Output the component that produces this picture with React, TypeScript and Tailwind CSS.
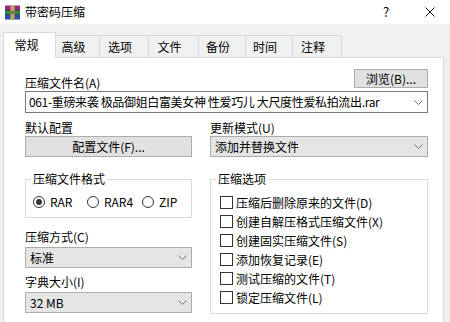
import React from "react";

const Chevron = () => (
  <svg width="9" height="5" viewBox="0 0 9 5" className="shrink-0">
    <polyline points="0.5,0.5 4.5,4.5 8.5,0.5" fill="none" stroke="#707070" strokeWidth="1" />
  </svg>
);

const RarIcon = () => (
  <svg width="15" height="15" viewBox="0 0 15 15" className="shrink-0">
    <rect x="0" y="0.5" width="15" height="4.5" fill="#9a2a7a" />
    <rect x="0" y="5" width="15" height="4.5" fill="#2f8a48" />
    <rect x="0" y="9.5" width="15" height="5" fill="#2c4fa8" />
    <rect x="0" y="4.6" width="15" height="0.8" fill="#5a1a4a" />
    <rect x="0" y="9.1" width="15" height="0.8" fill="#1a4a28" />
    <rect x="5.5" y="0" width="4" height="15" fill="#c8a36a" />
    <rect x="6" y="6" width="3" height="3" fill="#8a6a3a" />
  </svg>
);

const Radio = ({ checked, label }: { checked?: boolean; label: string }) => (
  <div className="flex items-center h-[16px]">
    <div className="w-[12px] h-[12px] rounded-full border border-[#333] bg-white flex items-center justify-center shrink-0">
      {checked && <div className="w-[6px] h-[6px] rounded-full bg-[#333]" />}
    </div>
    <span className="ml-[5px]">{label}</span>
  </div>
);

const Check = ({ label }: { label: string }) => (
  <div className="flex items-center h-[19px]">
    <div className="w-[13px] h-[13px] border border-[#333] bg-white shrink-0" />
    <span className="ml-[3px] whitespace-nowrap">{label}</span>
  </div>
);

const GraySelect = ({ value, w }: { value: string; w: string }) => (
  <div className={`${w} h-[21px] bg-[#e5e5e5] border border-[#acacac] flex items-center justify-between pl-[4px] pr-[4px]`}>
    <span className="whitespace-nowrap">{value}</span>
    <Chevron />
  </div>
);

export default function App() {
  const tabs = [
    { t: "高级", w: "w-[44px]" },
    { t: "选项", w: "w-[49px]" },
    { t: "文件", w: "w-[50px]" },
    { t: "备份", w: "w-[47px]" },
    { t: "时间", w: "w-[47px]" },
    { t: "注释", w: "w-[49px]" },
  ];
  return (
    <div className="w-[450px] h-[322px] overflow-hidden bg-[#f0f0f0] text-[12px] leading-[16px] text-[#000] font-['Noto_Sans_CJK_SC','Noto_Sans',sans-serif]">
      {/* title bar */}
      <div className="h-[24px] bg-white flex items-center">
        <div className="ml-[5px]">
          <RarIcon />
        </div>
        <span className="ml-[5px] text-[12px]">带密码压缩</span>
        <div className="flex-1" />
        <div className="w-[40px] flex justify-center text-[13px]">?</div>
        <div className="w-[40px] ml-[4px] flex justify-center">
          <svg width="10" height="10" viewBox="0 0 10 10">
            <line x1="0.5" y1="0.5" x2="9.5" y2="9.5" stroke="#111" strokeWidth="1" />
            <line x1="9.5" y1="0.5" x2="0.5" y2="9.5" stroke="#111" strokeWidth="1" />
          </svg>
        </div>
      </div>

      {/* tabs */}
      <div className="relative z-10 h-[34px] -mb-px flex items-end pl-[3px]">
        <div className="w-[53px] h-[26px] bg-white border border-b-0 border-[#d9d9d9] flex items-center justify-center pr-[6px] pb-[2px]">
          常规
        </div>
        {tabs.map((t) => (
          <div
            key={t.t}
            className={`${t.w} h-[23px] bg-[#f0f0f0] border border-l-0 border-[#d9d9d9] flex items-center justify-center pr-[8px]`}
          >
            {t.t}
          </div>
        ))}
      </div>

      {/* panel */}
      <div className="ml-[3px] w-[441px] h-[280px] bg-white border border-[#d9d9d9] pl-[21px] pt-[11px]">
        <div className="w-[403px] flex items-end justify-between h-[19px]">
          <span className="translate-y-[3px] whitespace-nowrap">压缩文件名(A)</span>
          <div className="w-[74px] h-[19px] bg-[#e1e1e1] border border-[#adadad] flex items-center justify-center">
            浏览(B)...
          </div>
        </div>
        <div className="mt-[3px] w-[403px] h-[22px] bg-white border border-[#7a7a7a] flex items-center justify-between pl-[3px] pr-[4px]">
          <span className="whitespace-nowrap tracking-[-0.35px]">061-重磅来袭 极品御姐白富美女神 性爱巧儿 大尺度性爱私拍流出.rar</span>
          <Chevron />
        </div>

        <div className="flex mt-[7px]">
          {/* left column */}
          <div className="w-[167px] flex flex-col">
            <span>默认配置</span>
            <div className="h-[21px] bg-[#e1e1e1] border border-[#adadad] flex items-center justify-center">
              配置文件(F)...
            </div>
            <fieldset className="mt-[14px] border border-[#dcdcdc] pl-[7px] pb-[7px]">
              <legend className="-ml-[2px] px-[2px]">压缩文件格式</legend>
              <div className="flex mt-[7px]">
                <div className="w-[54px]">
                  <Radio checked label="RAR" />
                </div>
                <div className="w-[55px]">
                  <Radio label="RAR4" />
                </div>
                <Radio label="ZIP" />
              </div>
            </fieldset>
            <span className="mt-[11px]">压缩方式(C)</span>
            <div className="mt-[2px]">
              <GraySelect value="标准" w="w-[167px]" />
            </div>
            <span className="mt-[6px]">字典大小(I)</span>
            <div className="mt-[2px]">
              <GraySelect value="32 MB" w="w-[167px]" />
            </div>
          </div>

          {/* right column */}
          <div className="ml-[18px] w-[218px] flex flex-col">
            <span>更新模式(U)</span>
            <GraySelect value="添加并替换文件" w="w-[218px]" />
            <fieldset className="mt-[14px] border border-[#dcdcdc] pl-[9px] pb-[6px]">
              <legend className="-ml-[4px] px-[2px]">压缩选项</legend>
              <div className="flex flex-col mt-[6px]">
                <Check label="压缩后删除原来的文件(D)" />
                <Check label="创建自解压格式压缩文件(X)" />
                <Check label="创建固实压缩文件(S)" />
                <Check label="添加恢复记录(E)" />
                <Check label="测试压缩的文件(T)" />
                <Check label="锁定压缩文件(L)" />
              </div>
            </fieldset>
          </div>
        </div>
      </div>
    </div>
  );
}
